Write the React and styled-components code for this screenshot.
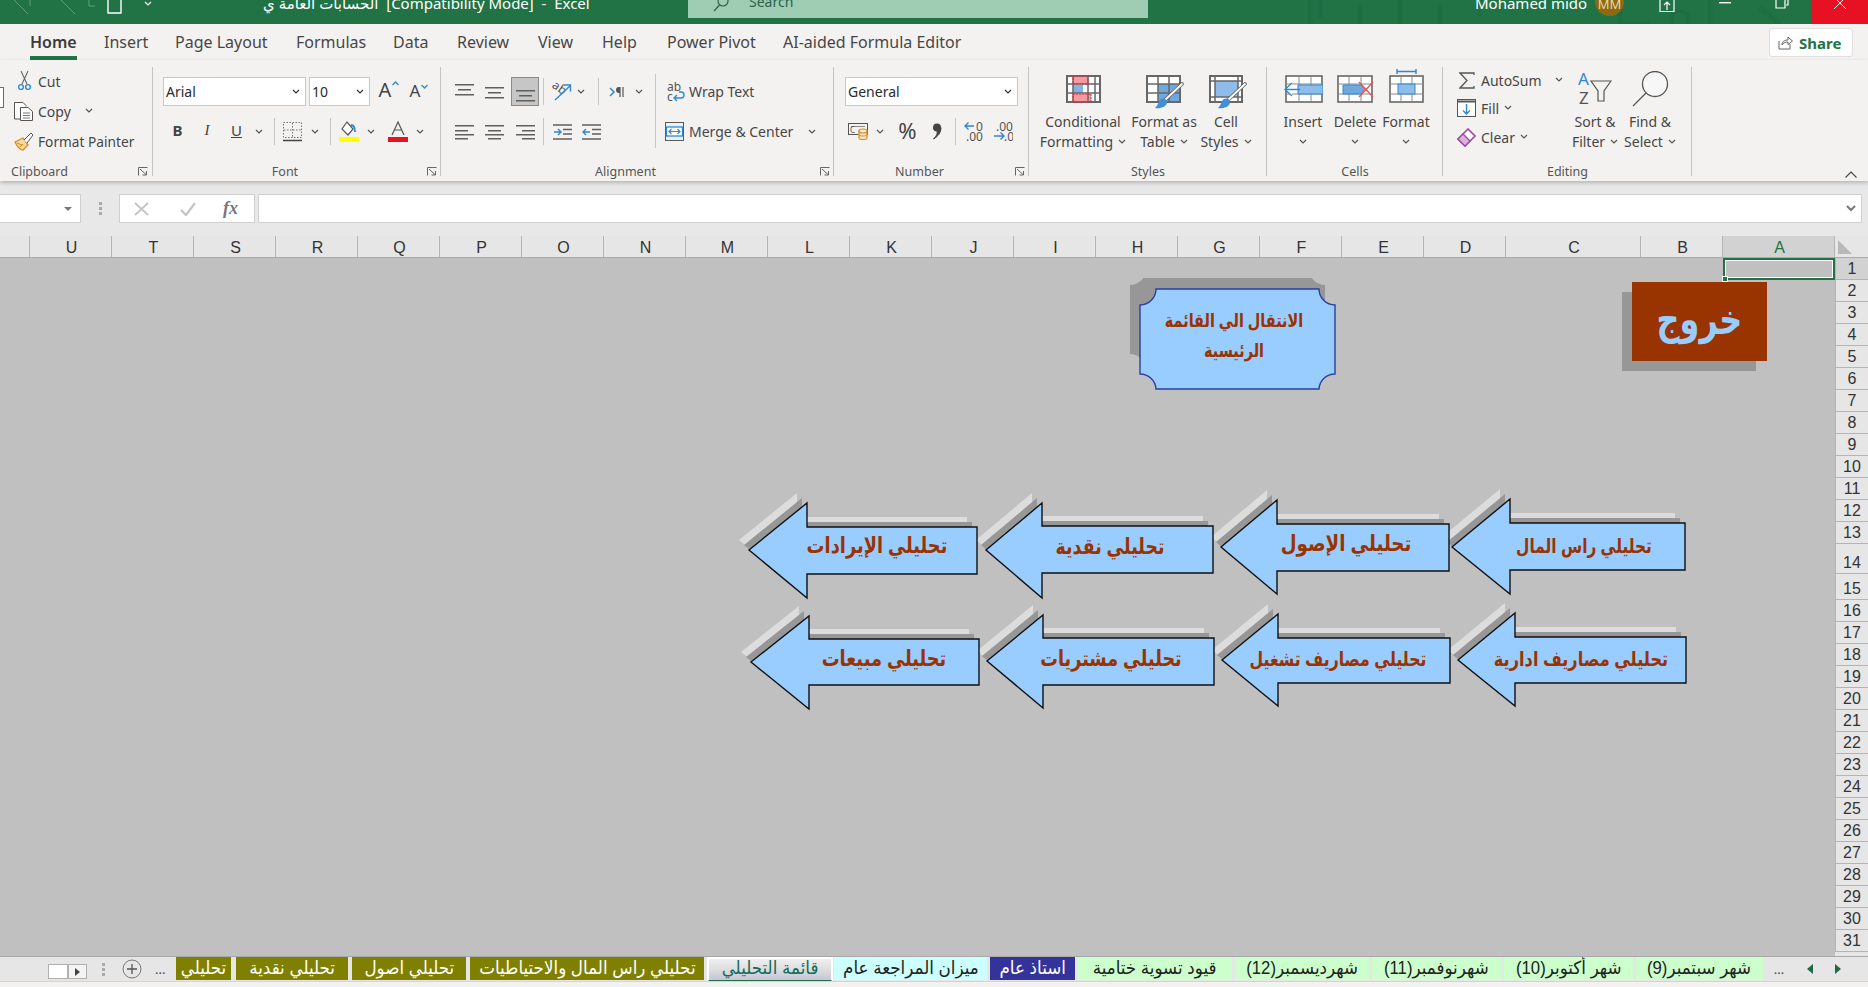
import React from "react";
import styled, { createGlobalStyle } from "styled-components";

const G = "#5f5f5f";
const B = "#2f88d2";
const UI = `"Noto Sans", "Open Sans", "DejaVu Sans", sans-serif`;
const AR = `"Liberation Sans", "DejaVu Sans", "Noto Sans", sans-serif`;

const Global = createGlobalStyle`
  html, body { margin: 0; padding: 0; background: #f3f2f1; overflow: hidden; }
  body { font-family: ${UI}; }
  svg { display: block; flex: none; }
`;
const Page = styled.div`width: 1868px; height: 987px; display: flex; flex-direction: column; overflow: hidden;`;

/* title bar */
const TitleBar = styled.header`
  height: 24px; flex: none; background: #217346; color: #fff; display: flex; align-items: flex-start;
  overflow: hidden; position: relative; font-size: 15px; line-height: 20px;
`;
const TitleItem = styled.span`
  flex: none; margin-left: ${p => p.$ml || 0}px; margin-top: ${p => (p.$mt === undefined ? -7 : p.$mt)}px;
  width: ${p => (p.$w ? `${p.$w}px` : "auto")}; white-space: pre; position: relative; opacity: ${p => p.$o || 1};
`;
const SearchBox = styled.div`
  flex: none; width: 460px; height: 18px; margin-left: ${p => p.$ml}px; background: #9fcdb3; color: #2d6148;
  display: flex; align-items: flex-start; padding-left: 25px; box-sizing: border-box; gap: 20px; font-size: 14px; position: relative;
`;
const Avatar = styled.div`
  flex: none; width: 29px; height: 29px; border-radius: 50%; margin-left: 14px; margin-top: -13px; background: #8c6a0f; color: #e7d9a8;
  font-size: 13px; text-align: center; line-height: 34px; position: relative; overflow: hidden;
`;
const CloseBox = styled.div`
  flex: none; width: 57px; height: 24px; margin-left: auto; background: #e81123; display: flex; justify-content: center; position: relative;
`;
const Pattern = styled.svg`position: absolute; left: 1290px; top: 0;`;

/* ribbon tabs */
const TabRow = styled.nav`height: 36px; flex: none; background: #f3f2f1; display: flex; padding-left: 30px; position: relative;`;
const RibbonTab = styled.div`
  flex: none; width: ${p => p.$w}px; font-size: 16px; line-height: 37px; color: ${p => (p.$on ? "#3b3a39" : "#484644")};
  font-weight: ${p => (p.$on ? 600 : 400)}; white-space: nowrap; position: relative;
  ${p => p.$on && `&::after { content: ""; position: absolute; left: 0; bottom: 0; width: 47px; height: 4px; background: #217346; }`}
`;
const ShareBtn = styled.div`
  margin-left: auto; margin-right: 15px; margin-top: 4px; width: 84px; height: 29px; box-sizing: border-box; background: #fff;
  border: 1px solid #e1dfdd; border-radius: 3px; display: flex; align-items: center; gap: 6px; padding-left: 8px;
  color: #217346; font-weight: 700; font-size: 15px;
`;

/* ribbon */
const Ribbon = styled.section`
  height: 121px; flex: none; background: #f3f2f1; display: flex; padding-top: 7px; box-sizing: border-box;
  position: relative; z-index: 2; box-shadow: 0 2px 4px rgba(0,0,0,.22); color: #484644; font-size: 14px;
`;
const Group = styled.div`
  flex: none; width: ${p => p.$w}px; height: 111px; display: flex; flex-direction: column;
  background: linear-gradient(#c4c4c4, #c4c4c4) right top / 1px 109px no-repeat;
`;
const GroupBody = styled.div`height: 98px; flex: none; display: flex;`;
const Foot = styled.div`height: 13px; display: flex; align-items: center; font-size: 12.5px; line-height: 13px; color: #555;`;
const FootLabel = styled.span`
  flex: ${p => (p.$ml !== undefined ? "none" : 1)}; text-align: center; margin-left: ${p => p.$ml || 0}px; white-space: nowrap;
`;
const Launcher = styled.span`margin-left: ${p => p.$ml || 10}px; margin-right: 4px; flex: none;`;
const Col = styled.div`
  flex: none; display: flex; flex-direction: column; width: ${p => (p.$w ? `${p.$w}px` : "auto")}; margin-top: ${p => p.$mt || 0}px;
`;
const Row = styled.div`
  display: flex; align-items: center; flex: none; height: ${p => p.$h || 30}px; margin-top: ${p => p.$mt || 0}px;
`;
const Item = styled.span`
  flex: none; display: inline-flex; align-items: center; justify-content: ${p => p.$left ? "flex-start" : "center"};
  margin-left: ${p => p.$ml || 0}px; width: ${p => (p.$w ? `${p.$w}px` : "auto")}; white-space: nowrap;
  font-size: ${p => (p.$s ? `${p.$s}px` : "inherit")};
`;
const Sep = styled.span`flex: none; width: 1px; height: ${p => p.$h || 27}px; background: #c8c6c4; margin-left: ${p => p.$ml || 0}px; margin-top: ${p => p.$mt || 0}px;`;
const PasteEdge = styled.div`flex: none; width: 4px; height: 21px; margin-top: 20px; background: #fff; border: 1px solid #6a6a6a; border-left: 0; box-sizing: border-box;`;
const Select = styled.div`
  flex: none; height: 29px; width: ${p => p.$w}px; margin-left: ${p => p.$ml || 0}px; box-sizing: border-box; background: #fff;
  border: 1px solid #c8c8c8; display: flex; align-items: center; justify-content: space-between; padding: 0 5px 0 2px;
  font-size: 14px; color: #2b2b2b;
`;
const Letter = styled.span`
  flex: none; margin-left: ${p => p.$ml || 0}px; width: ${p => p.$w}px; margin-top: ${p => p.$mt || 0}px; display: inline-flex; align-items: flex-start; justify-content: center;
  font-family: ${p => p.$serif ? `"Liberation Serif", serif` : UI}; font-size: ${p => p.$s || 15}px;
  font-weight: ${p => (p.$b ? 700 : 400)}; font-style: ${p => (p.$i ? "italic" : "normal")};
  text-decoration: ${p => (p.$u ? "underline" : "none")}; color: #444; line-height: 1.2;
`;
const GrowCaret = styled.span`margin-top: 3px; margin-left: 1px; flex: none;`;
const ActiveAlign = styled.span`
  flex: none; width: 28px; height: 29px; margin-left: ${p => p.$ml}px; background: #c6c6c6; border: 1px solid #8a8a8a;
  box-sizing: border-box; display: flex; align-items: flex-end; justify-content: center; padding-bottom: 3px;
`;
const BigBtn = styled.div`
  flex: none; width: ${p => p.$w}px; margin-left: ${p => p.$ml || 0}px; display: flex; flex-direction: column; align-items: center;
`;
const BigIcon = styled.div`height: 45px; display: flex; align-items: flex-end; justify-content: center; padding-bottom: ${p => (p.$pb === undefined ? 9 : p.$pb)}px; box-sizing: border-box; margin-left: ${p => p.$ml || 0}px;`;
const BigText = styled.div`height: 20px; line-height: 20px; display: flex; align-items: center; gap: 5px; white-space: nowrap;`;
const RibbonEnd = styled.div`flex: 1; height: 111px; display: flex; align-items: flex-end; justify-content: flex-end; padding: 0 11px 4px 0;`;

/* formula bar */
const FormulaBar = styled.div`
  height: 55px; flex: none; box-sizing: border-box; padding-top: 13px; background: #e8e8e8; display: flex;
`;
const NameBox = styled.div`flex: none; width: 81px; height: 29px; box-sizing: border-box; background: #fff; border: 1px solid #d0d0d0; border-left: 0; display: flex; align-items: center; justify-content: flex-end; padding-right: 8px;`;
const Dots = styled.div`flex: none; width: 38px; height: 29px; display: flex; align-items: center; justify-content: center;`;
const FxBox = styled.div`flex: none; width: 136px; height: 29px; box-sizing: border-box; background: #fff; border: 1px solid #d0d0d0; display: flex; align-items: center; color: #777;`;
const Fx = styled.span`margin-left: 27px; font-family: "Liberation Serif", serif; font-style: italic; font-weight: 700; font-size: 18px; color: #777;`;
const Input = styled.div`flex: none; width: 1604px; height: 29px; margin-left: 3px; box-sizing: border-box; background: #fff; border: 1px solid #d0d0d0; display: flex; align-items: center; justify-content: flex-end; padding-right: 5px;`;

/* column headers */
const Headers = styled.div`height: 21px; flex: none; display: flex; background: #e6e6e6; border-bottom: 1px solid #ababab; box-sizing: content-box;`;
const ColHead = styled.div`
  flex: none; width: ${p => p.$w}px; box-sizing: border-box; border-right: 1px solid #b4b4b4; text-align: center; padding-left: 2px;
  font-family: "Liberation Sans", sans-serif; font-size: 16px; line-height: 23px;
  background: ${p => (p.$on ? "#d2d2d2" : "transparent")}; color: ${p => (p.$on ? "#217346" : "#333")};
`;
const Corner = styled.div`flex: 1; display: flex; align-items: center; padding-left: 3px;`;

/* sheet */
const SheetRow = styled.div`height: 698px; flex: none; display: flex;`;
const Sheet = styled.main`flex: 1; background: #c0c0c0; position: relative; overflow: hidden;`;
const RowHeads = styled.div`flex: none; width: 33px; background: #e6e6e6;`;
const RowHead = styled.div`
  height: ${p => p.$h}px; box-sizing: border-box; border-bottom: 1px solid #b4b4b4; border-left: 1px solid #b4b4b4;
  text-align: center; font-family: "Liberation Sans", sans-serif; font-size: 16px; color: #333;
  line-height: ${p => p.$h + 1}px; display: flex; align-items: flex-end; justify-content: center;
  background: ${p => (p.$on ? "#d2d2d2" : "transparent")};
  span { line-height: 21px; }
`;
const Selection = styled.div`
  position: absolute; left: 1723px; top: 0; width: 112px; height: 22px; box-sizing: border-box; border: 2px solid #217346;
  &::before { content: ""; position: absolute; inset: 0; border: 1px solid #fff; }
  &::after { content: ""; position: absolute; left: -3px; bottom: -4px; width: 6px; height: 6px; background: #217346; border: 1px solid #fff; box-sizing: border-box; }
`;
const ExitShadow = styled.div`position: absolute; left: 1622px; top: 34px; width: 134px; height: 79px; background: #979797;`;
const ExitBtn = styled.div`
  position: absolute; left: 1632px; top: 24px; width: 135px; height: 79px; padding-bottom: 5px; box-sizing: border-box; background: #993300; color: #99ccff;
  font-family: ${AR}; font-weight: 700; font-size: 42px; display: flex; align-items: center; justify-content: center; direction: rtl;
  span { display: inline-block; transform: scaleX(.76); }
`;
const Shape = styled.div`position: absolute; left: ${p => p.$x}px; top: ${p => p.$y}px;`;
const ShapeText = styled.div`
  position: absolute; transform: translate(-50%, -50%) scaleX(${p => p.$sx}); white-space: nowrap; direction: rtl; color: #993300;
  font-family: ${AR}; font-weight: 700; font-size: ${p => p.$s}px; line-height: 30px; text-align: center;
`;

/* sheet tabs */
const TabsBar = styled.footer`height: 25px; flex: none; background: #e6e6e6; border-top: 1px solid #a8a8a8; display: flex; align-items: stretch; box-sizing: border-box; font-family: ${AR};`;
const BottomStrip = styled.div`height: 7px; flex: none; background: #f3f2f1; border-top: 1px solid #d4d4d4; box-sizing: border-box;`;
const NavCell = styled.div`flex: none; width: ${p => p.$w}px; margin-left: ${p => p.$ml || 0}px; margin-top: 7px; height: 15px; box-sizing: border-box; background: ${p => p.$bg || "#fff"}; border: 1px solid #b0b0b0; display: flex; align-items: center; justify-content: center;`;
const BarSlot = styled.div`flex: none; margin-left: ${p => p.$ml || 0}px; width: ${p => (p.$w ? `${p.$w}px` : "auto")}; display: flex; align-items: center; justify-content: ${p => p.$left ? "flex-start" : "center"}; color: #444; font-family: ${UI}; font-size: 13px;`;
const SheetTab = styled.div`
  flex: none; width: ${p => p.$w}px; margin-left: ${p => p.$ml || 0}px; height: 23px; box-sizing: border-box;
  background: ${p => p.$bg}; color: ${p => p.$fg}; direction: rtl; overflow: hidden; white-space: nowrap;
  font-size: 18px; line-height: 22px; text-align: center;
  span { display: inline-block; transform: scaleX(.93); }
  ${p => p.$on && `background: linear-gradient(#efefef 0, #dcdcdc 55%, #c7c4dc 100%); height: 25px; border: 2px solid #fff; border-bottom: 2px solid #217346; line-height: 19px;`}
`;

/* small icons */
const Chev = ({ c = "#555" }) => <svg width="8" height="6" viewBox="0 0 8 6"><path d="M1 1l3 3 3-3" fill="none" stroke={c} strokeWidth="1.2" /></svg>;
const LauncherIcon = () => <svg width="10" height="9" viewBox="0 0 10 9"><path d="M.5 8.5V.5H9.5M2 2l6 5.5M8.5 4v4H4.5" fill="none" stroke="#666" strokeWidth="1" /></svg>;
const Lines = ({ rows, w = 19 }) => (
  <svg width={w} height="16" viewBox={`0 0 ${w} 16`}>
    {rows.map(([x, l, y], i) => <rect key={i} x={x} y={y} width={l} height="1.5" fill={G} />)}
  </svg>
);
const Scissors = () => <svg width="13" height="20" viewBox="0 0 13 20"><path d="M3 0l6 13M10 0L4 13" stroke="#666" strokeWidth="1.1" fill="none" /><circle cx="3" cy="16" r="2.4" fill="none" stroke={B} strokeWidth="1.4" /><circle cx="10" cy="16" r="2.4" fill="none" stroke={B} strokeWidth="1.4" /></svg>;
const CopyIcon = () => <svg width="20" height="19" viewBox="0 0 20 19"><path d="M6 17H.5V.5H9l3 3v1" fill="#fff" stroke="#555" /><path d="M6.5 5.5H14l4.5 4v9h-12z" fill="#fff" stroke="#555" /><path d="M9 11h7M9 13.5h7M9 16h7" stroke="#777" /></svg>;
const Painter = () => <svg width="20" height="19" viewBox="0 0 20 19"><path d="M1 10l8-4 5 7-5 5C6 18 3 14 1 10z" fill="#f5d9a0" stroke="#d98a1c" strokeWidth="1.3" /><path d="M10 8l7-7 2 2-6 8" fill="#fff" stroke="#555" /><path d="M3 11l5 2M6 15l3-3" stroke="#d98a1c" /></svg>;
const Caret = ({ up }) => <svg width="7" height="5" viewBox="0 0 7 5"><path d={up ? "M.5 4L3.5 1l3 3" : "M.5 1l3 3 3-3"} fill="none" stroke={B} strokeWidth="1.3" /></svg>;
const Borders = () => <svg width="19" height="20" viewBox="0 0 19 20"><path d="M.5.5h18v15H.5zM9.5 1v14M1 8h17" fill="none" stroke="#777" strokeDasharray="1.5 1.5" /><path d="M0 18.5h19" stroke="#444" strokeWidth="1.5" /></svg>;
const FillIcon = () => <svg width="20" height="21" viewBox="0 0 20 21"><path d="M8 1L3 8l6 6 5-6z" fill="#fff" stroke="#555" strokeWidth="1.2" /><path d="M12 4c3 0 4 3 4 7" fill="none" stroke={B} strokeWidth="1.8" /><rect y="16" width="20" height="5" fill="#ffff00" /></svg>;
const ColorIcon = () => <svg width="20" height="21" viewBox="0 0 20 21"><path d="M4 14L10 1l6 13M6.500 9h7" fill="none" stroke="#555" strokeWidth="1.2" /><rect y="16" width="20" height="5" fill="#e81123" /></svg>;
const Orient = () => <svg width="20" height="19" viewBox="0 0 20 19"><text x="0" y="9" fontSize="12" fontFamily="Noto Sans" fill="#555" transform="rotate(35 6 6)">ab</text><path d="M3 18L18 4M12 3h6.500v6.500" fill="none" stroke={B} strokeWidth="1.4" /></svg>;
const Rtl = () => <svg width="16" height="12" viewBox="0 0 16 12"><path d="M1 2l4 4-4 4" fill="none" stroke={B} strokeWidth="1.5" /><path d="M11 1v10M14 1v10" stroke="#555" strokeWidth="1.2" /><path d="M15 1h-5a3 3 0 0 0-3 3 3 3 0 0 0 3 3h1V1z" fill="#555" /></svg>;
const WrapIcon = () => <svg width="18" height="20" viewBox="0 0 18 20"><text x="0" y="9" fontSize="12" fontFamily="Noto Sans" fill="#555">ab</text><text x="0" y="19" fontSize="12" fontFamily="Noto Sans" fill="#555">c</text><path d="M8 16h6c4 0 4-6 0-6h-2M10 13l-3 3 3 3" fill="none" stroke={B} strokeWidth="1.4" /></svg>;
const MergeIcon = () => <svg width="19" height="19" viewBox="0 0 19 19"><rect x=".5" y=".5" width="18" height="18" fill="#e9f2fa" stroke="#5a5a5a" /><rect x="1.500" y="5" width="16" height="9" fill="#fff" stroke={B} strokeWidth="1.3" /><path d="M4 9.500h11M6.500 7l-2.500 2.500L6.500 12M12.500 7l2.500 2.500-2.500 2.500" fill="none" stroke={B} strokeWidth="1.2" /></svg>;
const IndentI = ({ out }) => <svg width="19" height="16" viewBox="0 0 19 16"><path d="M0 1h19M10 5.500h9M10 10h9M0 15h19" stroke={G} strokeWidth="1.4" /><path d={out ? "M8 8H1M4 5L1 8l3 3" : "M1 8h7M5 5l3 3-3 3"} fill="none" stroke={B} strokeWidth="1.4" /></svg>;
const Accounting = () => (
  <svg width="20" height="17" viewBox="0 0 20 17">
    <rect x=".5" y=".5" width="19" height="11" fill="#f3f2f1" stroke="#555" />
    <path d="M3 3.500h14" stroke="#888" />
    <text x="2" y="10" fontSize="8" fontFamily="Noto Sans" fill="#555">C</text>
    <path d="M11 8v7c0 2 8 2 8 0V8z" fill="#fbe7c6" stroke="#d98a1c" strokeWidth="1.2" />
    <ellipse cx="15" cy="8" rx="4" ry="2" fill="#fbe7c6" stroke="#d98a1c" strokeWidth="1.2" />
    <path d="M11 11.500c0 2 8 2 8 0" fill="none" stroke="#d98a1c" />
  </svg>
);
const Comma = () => <svg width="10" height="17" viewBox="0 0 10 17"><circle cx="5" cy="4.500" r="4" fill="#444" /><path d="M9 4.500c0 5-3 9-7.500 11.500C5 12.500 5.500 10 5 8z" fill="#444" stroke="#444" /></svg>;
const Decimal = ({ inc }) => (
  <svg width="19" height="21" viewBox="0 0 19 21" fontFamily="Noto Sans" fontSize="12" fill="#555">
    {inc ? <><path d="M10 5H1M4.500 1.500L1 5l3.500 3.500" fill="none" stroke={B} strokeWidth="1.4" /><text x="12" y="10">0</text><text x="2" y="20">.00</text></>
      : <><text x="2" y="10">.00</text><path d="M0 15h10M6.500 11.500L10 15l-3.500 3.500" fill="none" stroke={B} strokeWidth="1.4" /><text x="10" y="20">.0</text></>}
  </svg>
);
const Table = ({ children, w = 35, h = 28, v = [12, 23], r = [9, 18], full = 38 }) => (
  <svg width={full} height={34} viewBox={`0 0 ${full} 34`}>
    <rect x="1" y="1" width={w - 2} height={h - 2} fill="#fff" stroke="#666" strokeWidth="1.8" />
    {children && children[0]}
    {v.map(a => <path key={a} d={`M${a} 0v${h}`} stroke="#666" strokeWidth="1.5" />)}
    {r.map(a => <path key={a} d={`M0 ${a}h${w}`} stroke="#666" strokeWidth="1.5" />)}
    <rect x="1" y="1" width={w - 2} height={h - 2} fill="none" stroke="#666" strokeWidth="1.8" />
    {children && children[1]}
  </svg>
);
const Brush = () => (
  <g>
    <path d="M36 9L19 25" stroke="#666" strokeWidth="3.6" strokeLinecap="round" />
    <path d="M36 9L19 25" stroke="#fff" strokeWidth="1.8" strokeLinecap="round" />
    <path d="M9 33c5 1 12-1 12-6 0-4-6-5-8-1-1 3-2 5-4 7z" fill="#3f8fd2" />
  </g>
);
const Share = () => <svg width="15" height="15" viewBox="0 0 15 15"><path d="M1 6v8h11V9M4 10c0-4 3-5 6-5V2l4.500 4L10 9.500V7C7 7 5 8 4 10z" fill="none" stroke="#666" strokeWidth="1" /></svg>;

const tabs = [["Home", 74, 1], ["Insert", 71], ["Page Layout", 121], ["Formulas", 97], ["Data", 64], ["Review", 81], ["View", 64], ["Help", 65], ["Power Pivot", 116], ["AI-aided Formula Editor", 200]];
const cols = "UTSRQPONMLKJIHGFED".split("");
const rowH = [22, 22, 22, 22, 22, 22, 22, 22, 22, 22, 22, 22, 22, 30, 26, 22, 22, 22, 22, 22, 22, 22, 22, 22, 22, 22, 22, 22, 22, 22, 22];

const Arrow = ({ a }) => {
  const [tip, midY, back, top, bot, sT, sB, right] = a.g;
  const pts = `${tip},${midY} ${back},${top} ${back},${sT} ${right},${sT} ${right},${sB} ${back},${sB} ${back},${bot}`;
  return (
    <>
      <Shape $x={0} $y={0}>
        <svg width="1835" height="698" viewBox="0 257 1835 698">
          <polygon points={pts} transform="translate(-10 -10)" fill="#dcdcdc" />
          <polygon points={pts} transform="translate(-5 -5)" fill="#979797" />
          <polygon points={pts} fill="#99ccff" stroke="#111" strokeWidth="1.4" />
        </svg>
      </Shape>
      <Shape $x={a.cx} $y={a.cy - 257}><ShapeText $s={a.s} $sx={a.sx}>{a.t}</ShapeText></Shape>
    </>
  );
};
const arrows = [
  { t: "تحليلي راس المال", g: [1452, 546, 1510, 498, 593, 522, 569, 1685], cx: 1584, cy: 545, s: 20, sx: .77 },
  { t: "تحليلي الإصول", g: [1221, 546, 1277, 499, 593, 523, 570, 1449], cx: 1346, cy: 543, s: 22, sx: .83 },
  { t: "تحليلي نقدية", g: [986, 549, 1042, 502, 597, 525, 572, 1213], cx: 1110, cy: 546, s: 22, sx: .79 },
  { t: "تحليلي الإيرادات", g: [749, 549, 807, 502, 597, 526, 573, 977], cx: 877, cy: 545, s: 22, sx: .81 },
  { t: "تحليلي مصاريف ادارية", g: [1458, 659, 1515, 612, 705, 636, 682, 1686], cx: 1581, cy: 658, s: 20, sx: .81 },
  { t: "تحليلي مصاريف تشغيل", g: [1222, 659, 1278, 613, 705, 637, 682, 1450], cx: 1338, cy: 658, s: 20, sx: .785 },
  { t: "تحليلي مشتريات", g: [987, 660, 1043, 614, 707, 637, 684, 1214], cx: 1111, cy: 658, s: 22, sx: .8 },
  { t: "تحليلي مبيعات", g: [751, 661, 809, 615, 708, 638, 684, 979], cx: 884, cy: 658, s: 22, sx: .81 },
];
const sheetTabs = [
  ["تحليلي", 55, "#808000", "#fff", 0],
  ["تحليلي نقدية", 112, "#808000", "#fff", 5],
  ["تحليلي اصول", 114, "#808000", "#fff", 4],
  ["تحليلي راس المال والاحتياطيات", 234, "#808000", "#fff", 4],
  ["قائمة التحليلي", 126, "#fff", "#0f6b5a", 3, 1],
  ["ميزان المراجعة عام", 153, "#ccffff", "#222", 1],
  ["استاذ عام", 85, "#333399", "#fff", 3],
  ["قيود تسوية ختامية", 154, "#ccffcc", "#222", 3],
  ["شهرديسمبر(12)", 134, "#ccffcc", "#222", 3],
  ["شهرنوفمبر(11)", 129, "#ccffcc", "#222", 3],
  ["شهر أكتوبر(10)", 129, "#ccffcc", "#222", 3],
  ["شهر سبتمبر(9)", 127, "#ccffcc", "#222", 3],
];

export default function App() {
  return (
    <Page>
      <Global />
      <TitleBar>
        <Pattern width="510" height="24" viewBox="0 0 510 24"><path d="M20 0v24M30 0v18M70 4v20M110 0v24M150 4v20M190 0v16M330 0v24h30M420 0v24M470 8l20 16" stroke="#1f6e43" strokeWidth="5" fill="none" /><circle cx="390" cy="20" r="9" fill="none" stroke="#1f6e43" strokeWidth="4" /></Pattern>
        <TitleItem $ml={12} $mt={0} $o={0.3}><svg width="34" height="14" viewBox="0 0 34 14"><path d="M2 0l14 14M18 0v6" stroke="#fff" fill="none" /></svg></TitleItem>
        <TitleItem $ml={13} $mt={0} $o={0.3}><svg width="40" height="14" viewBox="0 0 40 14"><path d="M2 0l14 14M30 0v6h6" stroke="#fff" fill="none" /></svg></TitleItem>
        <TitleItem $ml={8} $mt={-1}><svg width="15" height="15" viewBox="0 0 15 15"><path d="M1 0v14h13V0" fill="none" stroke="#fff" strokeWidth="1.4" /></svg></TitleItem>
        <TitleItem $ml={22} $mt={1}><Chev c="#fff" /></TitleItem>
        <TitleItem $ml={111} $w={322}>الحسابات العامة ي  [Compatibility Mode]  -  Excel</TitleItem>
        <SearchBox $ml={103}>
          <svg width="16" height="12" viewBox="0 0 16 12"><circle cx="10" cy="1" r="5" fill="none" stroke="#2d6148" strokeWidth="1.2" /><path d="M6.500 5L1 11" stroke="#2d6148" strokeWidth="1.2" /></svg>
          <TitleItem $mt={-8}>Search</TitleItem>
        </SearchBox>
        <TitleItem $ml={327} $w={106}>Mohamed mido</TitleItem>
        <Avatar>MM</Avatar>
        <TitleItem $ml={35} $mt={0}><svg width="16" height="12" viewBox="0 0 16 12"><path d="M1 0v11.500h14V0M8 10V2M5 5l3-3 3 3" fill="none" stroke="#fff" strokeWidth="1.2" /></svg></TitleItem>
        <TitleItem $ml={44} $mt={2}><svg width="12" height="2"><rect width="12" height="1.4" fill="#fff" /></svg></TitleItem>
        <TitleItem $ml={44} $mt={0}><svg width="14" height="9" viewBox="0 0 14 9"><path d="M1 0v8h9V0M13 0v5h-2" fill="none" stroke="#fff" strokeWidth="1.2" /></svg></TitleItem>
        <CloseBox><svg width="12" height="9" viewBox="0 0 12 9"><path d="M0-3l12 12M12-3L0 9" fill="none" stroke="#fff" strokeWidth="1" /></svg></CloseBox>
      </TitleBar>

      <TabRow>
        {tabs.map(([t, w, on]) => <RibbonTab key={t} $w={w} $on={on}>{t}</RibbonTab>)}
        <ShareBtn><Share />Share</ShareBtn>
      </TabRow>

      <Ribbon>
        <Group $w={153}>
          <GroupBody>
            <PasteEdge />
            <Col $mt={-1}>
              <Row><Item $ml={14}><Scissors /></Item><Item $ml={7}>Cut</Item></Row>
              <Row><Item $ml={10}><CopyIcon /></Item><Item $ml={4}>Copy</Item><Item $ml={14}><Chev /></Item></Row>
              <Row><Item $ml={10}><Painter /></Item><Item $ml={4} $s={13.7}>Format Painter</Item></Row>
            </Col>
          </GroupBody>
          <Foot><FootLabel $ml={11}>Clipboard</FootLabel><Launcher $ml={70}><LauncherIcon /></Launcher></Foot>
        </Group>

        <Group $w={288}>
          <GroupBody>
            <Col>
              <Row $h={29} $mt={10}>
                <Select $w={143} $ml={10}>Arial<Chev c="#333" /></Select>
                <Select $w={61} $ml={3}>10<Chev c="#333" /></Select>
                <Letter $ml={8} $w={22} $s={20} $mt={-3}>A<GrowCaret><Caret up /></GrowCaret></Letter>
                <Letter $ml={9} $w={20} $s={17} $mt={-1}>A<GrowCaret><Caret /></GrowCaret></Letter>
              </Row>
              <Row $h={27} $mt={12}>
                <Letter $ml={20} $w={9} $s={15} $b $mt={-3}>B</Letter>
                <Letter $ml={20} $w={10} $s={15} $i $serif $mt={-3}>I</Letter>
                <Letter $ml={19} $w={11} $s={15} $u $mt={-3}>U</Letter>
                <Item $ml={13}><Chev /></Item>
                <Sep $ml={11} />
                <Item $ml={8}><Borders /></Item>
                <Item $ml={9}><Chev /></Item>
                <Sep $ml={11} />
                <Item $ml={8}><FillIcon /></Item>
                <Item $ml={8}><Chev /></Item>
                <Item $ml={13}><ColorIcon /></Item>
                <Item $ml={8}><Chev /></Item>
              </Row>
            </Col>
          </GroupBody>
          <Foot><FootLabel>Font</FootLabel><Launcher><LauncherIcon /></Launcher></Foot>
        </Group>

        <Group $w={393}>
          <GroupBody>
            <Col $w={214}>
              <Row $h={29} $mt={10}>
                <Item $ml={14}><Lines rows={[[0, 19, 0], [3, 13, 5], [0, 19, 10]]} /></Item>
                <Item $ml={11}><Lines rows={[[0, 19, 3], [3, 13, 8], [0, 19, 13]]} /></Item>
                <ActiveAlign $ml={7}><Lines rows={[[0, 19, 4], [3, 13, 9], [0, 19, 14]]} /></ActiveAlign>
                <Sep $ml={4} />
                <Item $ml={8}><Orient /></Item>
                <Item $ml={5}><Chev /></Item>
                <Sep $ml={13} />
                <Item $ml={10}><Rtl /></Item>
                <Item $ml={10}><Chev /></Item>
              </Row>
              <Row $h={27} $mt={12}>
                <Item $ml={14}><Lines rows={[[0, 19, 1], [0, 13, 6], [0, 19, 10], [0, 13, 14]]} /></Item>
                <Item $ml={11}><Lines rows={[[0, 19, 1], [3, 13, 6], [0, 19, 10], [3, 13, 14]]} /></Item>
                <Item $ml={12}><Lines rows={[[0, 19, 1], [6, 13, 6], [0, 19, 10], [6, 13, 14]]} /></Item>
                <Sep $ml={8} />
                <Item $ml={9}><IndentI /></Item>
                <Item $ml={10}><IndentI out /></Item>
              </Row>
            </Col>
            <Sep $h={74} $mt={7} />
            <Col>
              <Row $h={29} $mt={10}><Item $ml={11}><WrapIcon /></Item><Item $ml={4}>Wrap Text</Item></Row>
              <Row $h={27} $mt={12}><Item $ml={9}><MergeIcon /></Item><Item $ml={5} $w={106} $left>Merge &amp; Center</Item><Item $ml={13}><Chev /></Item></Row>
            </Col>
          </GroupBody>
          <Foot><FootLabel>Alignment</FootLabel><Launcher><LauncherIcon /></Launcher></Foot>
        </Group>

        <Group $w={195}>
          <GroupBody>
            <Col>
              <Row $h={29} $mt={10}><Select $w={173} $ml={11}>General<Chev c="#333" /></Select></Row>
              <Row $h={27} $mt={12}>
                <Item $ml={14}><Accounting /></Item>
                <Item $ml={8}><Chev /></Item>
                <Letter $ml={13} $w={21} $s={22} $mt={-3}>%</Letter>
                <Item $ml={14}><Comma /></Item>
                <Sep $ml={13} />
                <Item $ml={8}><Decimal inc /></Item>
                <Item $ml={11}><Decimal /></Item>
              </Row>
            </Col>
          </GroupBody>
          <Foot><FootLabel>Number</FootLabel><Launcher><LauncherIcon /></Launcher></Foot>
        </Group>

        <Group $w={238}>
          <GroupBody>
            <BigBtn $w={90} $ml={9}>
              <BigIcon $pb={3}>
                <Table v={[7, 22, 29]} r={[9, 18]} full={35}>
                  <g>
                    <rect x="7" y="1" width="15" height="8" fill="#f79a9f" />
                    <rect x="7" y="10" width="10" height="8" fill="#7fb4e4" />
                    <rect x="7" y="19" width="18" height="8" fill="#f79a9f" />
                  </g>
                  <g fill="none" stroke="#e0262f" strokeDasharray="2 1">
                    <rect x="7" y="1" width="15" height="8" />
                    <rect x="7" y="19" width="18" height="8" />
                  </g>
                </Table>
              </BigIcon>
              <BigText>Conditional</BigText>
              <BigText>Formatting <Chev /></BigText>
            </BigBtn>
            <BigBtn $w={70} $ml={1}>
              <BigIcon $pb={3} $ml={2}>
                <Table>
                  <rect x="12" y="9" width="22" height="18" fill="#6fa8dc" />
                  <Brush />
                </Table>
              </BigIcon>
              <BigText>Format as</BigText>
              <BigText>Table <Chev /></BigText>
            </BigBtn>
            <BigBtn $w={54}>
              <BigIcon $pb={3} $ml={4}>
                <Table w={34} v={[6, 29]} r={[6, 22]}>
                  <rect x="6" y="6" width="23" height="16" fill="#8dbde8" />
                  <Brush />
                </Table>
              </BigIcon>
              <BigText>Cell</BigText>
              <BigText>Styles <Chev /></BigText>
            </BigBtn>
          </GroupBody>
          <Foot><FootLabel>Styles</FootLabel></Foot>
        </Group>

        <Group $w={176}>
          <GroupBody>
            <BigBtn $w={56} $ml={8}>
              <BigIcon>
                <svg width="40" height="28" viewBox="0 0 40 28"><rect x="3" y="1" width="36" height="26" fill="#fff" stroke="#666" strokeWidth="1.6" /><path d="M16 1v26M28 1v26M3 9h36M3 19h36" stroke="#888" /><rect x="15" y="10" width="25" height="9" fill="#8dbde8" stroke={B} /><path d="M17 14.500H3M9 8l-7 6.500 7 6.500" fill="#fff" stroke={B} strokeWidth="1.3" /></svg>
              </BigIcon>
              <BigText>Insert</BigText>
              <BigText><Chev /></BigText>
            </BigBtn>
            <BigBtn $w={48}>
              <BigIcon>
                <svg width="37" height="28" viewBox="0 0 37 28"><rect x="1" y="1" width="34" height="26" fill="#fff" stroke="#666" strokeWidth="1.6" /><path d="M12 1v26M24 1v26M1 9h34M1 19h34" stroke="#888" /><path d="M6 10h18l4 4.500-4 4.500H6z" fill="#6fa8dc" stroke={B} /><path d="M22 7l14 15M36 7L22 22" stroke="#ef5350" strokeWidth="1.4" fill="none" /></svg>
              </BigIcon>
              <BigText>Delete</BigText>
              <BigText><Chev /></BigText>
            </BigBtn>
            <BigBtn $w={54}>
              <BigIcon>
                <svg width="35" height="34" viewBox="0 0 35 34"><path d="M8 2.500h19M8 0v5M27 0v5" stroke={B} strokeWidth="1.4" /><rect x="1" y="7" width="33" height="26" fill="#fff" stroke="#666" strokeWidth="1.6" /><path d="M12 7v26M23 7v26M1 15h33M1 25h33" stroke="#888" /><rect x="9" y="15" width="17" height="10" fill="#8dbde8" stroke={B} /></svg>
              </BigIcon>
              <BigText>Format</BigText>
              <BigText><Chev /></BigText>
            </BigBtn>
          </GroupBody>
          <Foot><FootLabel>Cells</FootLabel></Foot>
        </Group>

        <Group $w={249}>
          <GroupBody>
            <Col $w={125} $mt={-1}>
              <Row $h={28}>
                <Item $ml={16}><svg width="16" height="17" viewBox="0 0 16 17"><path d="M15 3V1H1l7 7.500L1 16h14v-2" fill="none" stroke="#555" strokeWidth="1.3" /></svg></Item>
                <Item $ml={6} $w={61} $left>AutoSum</Item><Item $ml={13}><Chev /></Item>
              </Row>
              <Row $h={28}>
                <Item $ml={14}><svg width="19" height="18" viewBox="0 0 19 18"><rect x=".5" y=".5" width="18" height="17" fill="#fff" stroke="#555" /><path d="M0 2.500h19" stroke="#555" strokeWidth="2" /><path d="M9.500 5v10M6 11.500l3.500 3.500 3.500-3.500" fill="none" stroke={B} strokeWidth="1.4" /></svg></Item>
                <Item $ml={5} $w={19} $left>Fill</Item><Item $ml={4}><Chev /></Item>
              </Row>
              <Row $h={30}>
                <Item $ml={14}><svg width="19" height="19" viewBox="0 0 19 19"><path d="M1 11l10-10 7 7-10 10z" fill="#fff" stroke="#a349a4" strokeWidth="1.6" /><path d="M1 11l5-5 7 7-5 5z" fill="#d9b3dc" stroke="#a349a4" strokeWidth="1.4" /></svg></Item>
                <Item $ml={5} $w={35} $left>Clear</Item><Item $ml={4}><Chev /></Item>
              </Row>
            </Col>
            <BigBtn $w={54}>
              <BigIcon $pb={6}>
                <svg width="34" height="35" viewBox="0 0 34 35" fontFamily="Noto Sans" fontSize="17"><text x="0" y="14" fill={B}>A</text><text x="1" y="33" fill="#555">Z</text><path d="M13 10h20l-7 10v10h-6V20z" fill="#f3f2f1" stroke="#555" strokeWidth="1.2" /></svg>
              </BigIcon>
              <BigText>Sort &amp;</BigText>
              <BigText>Filter <Chev /></BigText>
            </BigBtn>
            <BigBtn $w={56}>
              <BigIcon $pb={5}>
                <svg width="37" height="36" viewBox="0 0 37 36"><circle cx="23" cy="13" r="12.500" fill="#f7f7f7" stroke="#555" strokeWidth="1.3" /><path d="M14 22L1 35" stroke="#555" strokeWidth="1.3" /></svg>
              </BigIcon>
              <BigText>Find &amp;</BigText>
              <BigText>Select <Chev /></BigText>
            </BigBtn>
          </GroupBody>
          <Foot><FootLabel>Editing</FootLabel></Foot>
        </Group>
        <RibbonEnd><svg width="12" height="7" viewBox="0 0 12 7"><path d="M.5 6.500L6 1l5.500 5.500" fill="none" stroke="#444" strokeWidth="1.1" /></svg></RibbonEnd>
      </Ribbon>

      <FormulaBar>
        <NameBox><svg width="8" height="4" viewBox="0 0 8 4"><path d="M0 0h8L4 4z" fill="#777" /></svg></NameBox>
        <Dots><svg width="3" height="13" viewBox="0 0 3 13"><path d="M0 0h3v3H0zM0 5h3v3H0zM0 10h3v3H0z" fill="#aaa" /></svg></Dots>
        <FxBox>
          <Item $ml={14}><svg width="15" height="14" viewBox="0 0 15 14"><path d="M1 1l13 12M14 1L1 13" stroke="#c4c4c4" strokeWidth="1.8" /></svg></Item>
          <Item $ml={31}><svg width="16" height="14" viewBox="0 0 16 14"><path d="M1 8l5 5 9-12" fill="none" stroke="#c4c4c4" strokeWidth="2.2" /></svg></Item>
          <Fx>fx</Fx>
        </FxBox>
        <Input><svg width="10" height="8" viewBox="0 0 10 8"><path d="M1 1l4 4 4-4" fill="none" stroke="#777" strokeWidth="2" /></svg></Input>
      </FormulaBar>

      <Headers>
        <ColHead $w={30} />
        {cols.map(c => <ColHead key={c} $w={82}>{c}</ColHead>)}
        <ColHead $w={135}>C</ColHead>
        <ColHead $w={82}>B</ColHead>
        <ColHead $w={112} $on>A</ColHead>
        <Corner><svg width="14" height="14" viewBox="0 0 14 14"><path d="M14 14H0V0z" fill="#b8b8b8" /></svg></Corner>
      </Headers>

      <SheetRow>
        <Sheet>
          <Selection />
          <ExitShadow />
          <ExitBtn><span>خروج</span></ExitBtn>
          <Shape $x={1129} $y={20}>
            <svg width="207" height="112" viewBox="0 0 207 112">
              <path d="M27 1H190A16 16 0 0 0 206 17V86A16 16 0 0 0 190 102H27A16 16 0 0 0 11 86V17A16 16 0 0 0 27 1Z" fill="#979797" transform="translate(-10 -10)" />
              <path d="M27 11H190A16 16 0 0 0 206 27V96A16 16 0 0 0 190 111H27A16 16 0 0 0 11 96V27A16 16 0 0 0 27 11Z" fill="#99ccff" stroke="#2a3f9f" strokeWidth="1.4" />
            </svg>
          </Shape>
          <Shape $x={1234} $y={78}><ShapeText $s={19} $sx={.76}>الانتقال الي القائمة<br />الرئيسية</ShapeText></Shape>
          {arrows.map(a => <Arrow key={a.t} a={a} />)}
        </Sheet>
        <RowHeads>
          {rowH.map((h, i) => <RowHead key={i} $h={h} $on={i === 0}><span>{i + 1}</span></RowHead>)}
        </RowHeads>
      </SheetRow>

      <TabsBar>
        <NavCell $ml={48} $w={20} />
        <NavCell $w={19} $bg="#f4f4f4"><svg width="5" height="8" viewBox="0 0 5 8"><path d="M0 0l5 4-5 4z" fill="#444" /></svg></NavCell>
        <BarSlot $ml={15} $w={3}><svg width="3" height="13" viewBox="0 0 3 13"><path d="M0 0h3v3H0zM0 5h3v3H0zM0 10h3v3H0z" fill="#aaa" /></svg></BarSlot>
        <BarSlot $ml={17}><svg width="20" height="20" viewBox="0 0 20 20"><circle cx="10" cy="10" r="9" fill="none" stroke="#777" /><path d="M10 5v10M5 10h10" stroke="#555" strokeWidth="1.3" /></svg></BarSlot>
        <BarSlot $ml={13} $w={21} $left>...</BarSlot>
        {sheetTabs.map(([t, w, bg, fg, ml, on]) => <SheetTab key={t} $w={w} $bg={bg} $fg={fg} $ml={ml} $on={on}><span>{t}</span></SheetTab>)}
        <BarSlot $ml={8} $w={16}>...</BarSlot>
        <BarSlot $ml={20}><svg width="6" height="10" viewBox="0 0 6 10"><path d="M6 0L0 5l6 5z" fill="#1f6b41" /></svg></BarSlot>
        <BarSlot $ml={22}><svg width="6" height="10" viewBox="0 0 6 10"><path d="M0 0l6 5-6 5z" fill="#1f6b41" /></svg></BarSlot>
      </TabsBar>
      <BottomStrip />
    </Page>
  );
}
